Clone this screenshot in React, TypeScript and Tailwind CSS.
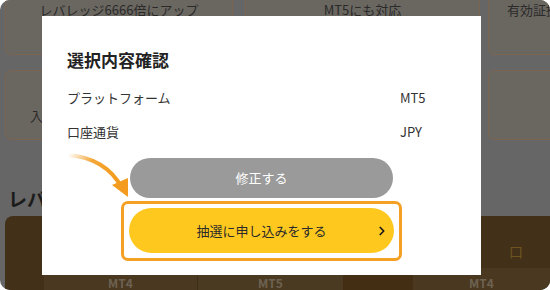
import { ChevronRight } from 'lucide-react'

const font = { fontFamily: '"Noto Sans CJK JP", "Noto Sans", sans-serif' }

const Arrow = () => (
  <svg className="absolute left-[62px] top-[150px]" width="72" height="52" viewBox="0 0 72 52">
    <defs>
      <linearGradient id="tail" x1="0" y1="0" x2="1" y2="0.4">
        <stop offset="0" stopColor="#f39c1f" stopOpacity="0" />
        <stop offset="0.45" stopColor="#f39c1f" stopOpacity="0.9" />
        <stop offset="1" stopColor="#f39c1f" />
      </linearGradient>
    </defs>
    <path d="M6 5 Q44 8 60 38" fill="none" stroke="url(#tail)" strokeWidth="4" strokeLinecap="round" />
    <path d="M50 35 L66 47 L66 28 Z" fill="#f39c1f" />
  </svg>
)

export default function App() {
  return (
    <div className="w-[550px] h-[290px] bg-white" style={font}>
      <div className="relative w-full h-full rounded-[10px] overflow-hidden bg-[#666666]">
        {/* dimmed page */}
        <div className="flex flex-col">
          <div className="flex gap-[12px] pl-[5px] -mt-[6px]">
            <div className="w-[228px] h-[61px] shrink-0 rounded-[6px] border border-[#7b6450] bg-[#6a6761] text-center text-[13px] text-[#2a2a2a] pt-[6px] leading-[18px]">レバレッジ6666倍にアップ</div>
            <div className="w-[235px] h-[61px] shrink-0 rounded-[6px] border border-[#7b6450] bg-[#6a6761] text-center text-[13px] text-[#2a2a2a] pt-[6px] leading-[18px]">MT5にも対応</div>
            <div className="-ml-[4px] w-[140px] h-[61px] shrink-0 rounded-[6px] border border-[#7b6450] bg-[#6a6761] text-[13px] text-[#2a2a2a] pt-[6px] pl-[18px] leading-[18px] whitespace-nowrap">有効証拠金</div>
          </div>
          <div className="flex gap-[12px] pl-[5px] mt-[15px]">
            <div className="w-[228px] h-[70px] shrink-0 rounded-[6px] border border-[#7b6450] bg-[#6a6761] text-[13px] text-[#2a2a2a] pt-[36px] pl-[24px] leading-[18px]">入金</div>
            <div className="w-[235px] h-[70px] shrink-0 rounded-[6px] border border-[#7b6450] bg-[#6a6761]" />
            <div className="-ml-[4px] w-[140px] h-[70px] shrink-0 rounded-[6px] border border-[#7b6450] bg-[#6a6761]" />
          </div>
          <div className="pl-[8px] mt-[47px] text-[19px] font-bold leading-[24px] text-[#1c1c1c]">レバレッジ</div>
          <div className="ml-[5px] mt-[5px] h-[80px] rounded-tl-[8px] bg-[#433019] flex flex-col">
            <div className="h-[52px] flex justify-end items-end pb-[10px] pr-[27px]">
              <span className="text-[14px] text-[#6e5520] leading-none">口</span>
            </div>
            <div className="flex h-[28px] text-[12px] font-bold text-[#6d6151] leading-[30px]">
              <div className="w-[39px] shrink-0" />
              <div className="w-[153px] shrink-0 bg-[#4a3820] text-center">MT4</div>
              <div className="w-[146px] shrink-0 bg-[#4b3a22] border-l border-[#3f2d16] text-center">MT5</div>
              <div className="w-[70px] shrink-0 bg-[#432e14]" />
              <div className="flex-1 bg-[#4a3820] text-center">MT4</div>
            </div>
          </div>
        </div>

        {/* modal */}
        <div className="absolute left-[42px] top-[16px] w-[439px] h-[259px] bg-white px-[25px] pt-[32px] flex flex-col">
          <div className="text-[17px] font-bold leading-[24px] text-[#222]">選択内容確認</div>
          <div className="mt-[16px] flex text-[13px] leading-[20px] text-[#333]">
            <span className="w-[333px]">プラットフォーム</span>
            <span>MT5</span>
          </div>
          <div className="mt-[14px] flex text-[13px] leading-[20px] text-[#333]">
            <span className="w-[333px]">口座通貨</span>
            <span>JPY</span>
          </div>
          <button className="mt-[16px] self-center w-[263px] h-[40px] rounded-full bg-[#9a9a9a] text-white text-[13px]">修正する</button>
          <div className="mt-[3px] self-center w-[281px] h-[60px] rounded-[7px] border-[3px] border-[#f4a024] px-[5px] pt-[4px]">
            <button className="relative w-full h-[45px] rounded-full bg-[#fec81f] text-[#2a2a2a] text-[13px]">
              抽選に申し込みをする
              <ChevronRight className="absolute right-[5px] top-[16px]" size={14} strokeWidth={3} color="#1a1a1a" />
            </button>
          </div>
        </div>

        <Arrow />
      </div>
    </div>
  )
}
